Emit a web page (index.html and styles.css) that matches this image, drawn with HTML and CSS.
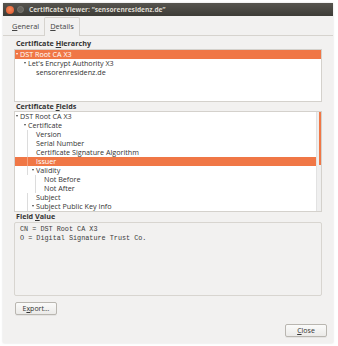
FILE: index.html
```html
<!DOCTYPE html>
<html lang="en">
<head>
    <meta charset="UTF-8">
    <title>Certificate Viewer</title>
    <link rel="stylesheet" href="styles.css">
</head>
<body>
    <div class="window">
        <div class="titlebar">
            <span class="btn-close"></span>
            <span class="btn-min"></span>
            <span class="title">Certificate Viewer: “sensorenresidenz.de”</span>
        </div>
        <div class="tabs">
            <div class="tab"><u>G</u>eneral</div>
            <div class="tab active"><u>D</u>etails</div>
        </div>
        <div class="page">
            <div class="label">Certificate <u>H</u>ierarchy</div>
            <div class="tree hierarchy">
                <div class="row lvl0 open selected"><span class="exp"></span>DST Root CA X3</div>
                <div class="row lvl1 open"><span class="exp"></span>Let's Encrypt Authority X3</div>
                <div class="row lvl2"><span class="exp"></span>sensorenresidenz.de</div>
            </div>

            <div class="label short">Certificate <u>F</u>ields</div>
            <div class="tree fields">
                <div class="rows">
                    <div class="row lvl0 open"><span class="exp"></span>DST Root CA X3</div>
                    <div class="row lvl1 open"><span class="exp"></span>Certificate</div>
                    <div class="row lvl2 line"><span class="exp"></span>Version</div>
                    <div class="row lvl2 line"><span class="exp"></span>Serial Number</div>
                    <div class="row lvl2 line"><span class="exp"></span>Certificate Signature Algorithm</div>
                    <div class="row lvl2 line selected"><span class="exp"></span>Issuer</div>
                    <div class="row lvl2 line open"><span class="exp"></span>Validity</div>
                    <div class="row lvl3 line"><span class="exp"></span>Not Before</div>
                    <div class="row lvl3 line"><span class="exp"></span>Not After</div>
                    <div class="row lvl2 line"><span class="exp"></span>Subject</div>
                    <div class="row lvl2 line open"><span class="exp"></span>Subject Public Key Info</div>
                </div>
                <div class="scrollbar"><div class="thumb"></div></div>
            </div>

            <div class="label">Field <u>V</u>alue</div>
            <div class="value">CN = DST Root CA X3
O = Digital Signature Trust Co.</div>

            <div class="export-row">
                <button class="button">E<u>x</u>port...</button>
            </div>
        </div>
        <div class="footer">
            <button class="button close"><u>C</u>lose</button>
        </div>
    </div>
</body>
</html>
```

FILE: styles.css
```css
body, html {
    margin: 0;
    padding: 0;
}
body {
    background: #ffffff;
    font-family: 'Open Sans', 'DejaVu Sans', sans-serif;
    font-size: 7px;
    color: #333333;
}
u {
    text-decoration: underline;
    text-underline-offset: 1px;
}
.window {
    margin: 3px;
    width: 330px;
    height: 340px;
    background: #f2f1f0;
    display: flex;
    flex-direction: column;
    box-shadow: 0 0 2px rgba(0, 0, 0, 0.15);
}
.titlebar {
    height: 13px;
    background: linear-gradient(#57554f, #3d3c37);
    display: flex;
    align-items: center;
    padding-left: 3px;
}
.btn-close {
    flex: none;
    width: 8px;
    height: 8px;
    border-radius: 50%;
    background: radial-gradient(circle at 50% 40%, #f58a5b, #e0542a);
}
.btn-min {
    flex: none;
    width: 7px;
    height: 7px;
    margin-left: 3px;
    border-radius: 50%;
    background: #67655f;
    border: 1px solid #7a7871;
    box-sizing: border-box;
}
.title {
    margin-left: 5px;
    color: #dfdbd2;
    font-weight: bold;
    font-size: 6.6px;
    white-space: nowrap;
}
.tabs {
    display: flex;
    align-items: flex-end;
    height: 19px;
    padding-left: 4px;
    border-bottom: 1px solid #d6d3ce;
}
.tab {
    padding: 0 5px;
    height: 16px;
    line-height: 14px;
    font-size: 7.4px;
    color: #444444;
}
.tab.active {
    height: 18px;
    line-height: 17px;
    border: 1px solid #d6d3ce;
    border-bottom: none;
    border-radius: 2px 2px 0 0;
    background: #f2f1f0;
    margin-bottom: -1px;
}
.page {
    padding: 3px 11px 0 11px;
    display: flex;
    flex-direction: column;
}
.label {
    font-weight: bold;
    font-size: 7.2px;
    height: 10px;
    line-height: 9px;
    padding-left: 2px;
}
.label.short {
    height: 9px;
    line-height: 9px;
}
.tree {
    background: #ffffff;
    border: 1px solid #d4d1cc;
    box-sizing: border-box;
}
.hierarchy {
    height: 53px;
}
.fields {
    height: 101px;
    display: flex;
}
.rows {
    flex: 1;
}
.row {
    height: 9px;
    line-height: 9px;
    display: flex;
    align-items: center;
    white-space: nowrap;
    font-size: 7.2px;
    color: #333333;
}
.row.selected {
    background: #f07746;
    color: #ffffff;
}
.row.lvl0 { padding-left: 1px; }
.row.lvl1 { padding-left: 9px; }
.row.lvl2 { padding-left: 17px; }
.row.lvl3 { padding-left: 25px; }
.row.line {
    background-image: linear-gradient(#dcdcdc, #dcdcdc);
    background-repeat: no-repeat;
    background-size: 1px 100%;
    background-position: 12px 0;
}
.row.lvl3.line {
    background-position: 20px 0;
}
.row.selected.line {
    background-color: #f07746;
    background-image: linear-gradient(#f6a07c, #f6a07c);
}
.exp {
    width: 4px;
    height: 9px;
    flex: none;
    position: relative;
}
.row.open .exp::after {
    content: "";
    position: absolute;
    left: 0;
    top: 3px;
    border-left: 1.5px solid transparent;
    border-right: 1.5px solid transparent;
    border-top: 2px solid #444444;
}
.row.selected.open .exp::after {
    border-top-color: #ffffff;
}
.scrollbar {
    width: 4px;
    background: #efefef;
    border-left: 1px solid #e2e2e2;
    display: flex;
    justify-content: flex-end;
}
.thumb {
    width: 2px;
    height: 53px;
    background: #f07746;
}
.value {
    height: 74px;
    border: 1px solid #d8d5d0;
    border-radius: 2px;
    background: #f2f1f0;
    box-sizing: border-box;
    padding: 2px 5px;
    font-family: 'Liberation Mono', 'DejaVu Sans Mono', monospace;
    font-size: 6.8px;
    line-height: 9px;
    white-space: pre;
    color: #3c3c3c;
}
.export-row {
    padding-top: 6px;
}
.button {
    font-family: 'Open Sans', 'DejaVu Sans', sans-serif;
    font-size: 7px;
    color: #333333;
    height: 13px;
    padding: 0 6px;
    border: 1px solid #b9b6b0;
    border-radius: 2px;
    background: linear-gradient(#fbfbfa, #ebeae8);
    box-shadow: 0 1px 0 rgba(0, 0, 0, 0.05);
}
.export-row .button {
    margin-left: 1px;
    width: 42px;
}
.footer {
    margin-top: auto;
    display: flex;
    justify-content: flex-end;
    padding: 0 6px 6px 0;
}
.close {
    width: 42px;
}
```
